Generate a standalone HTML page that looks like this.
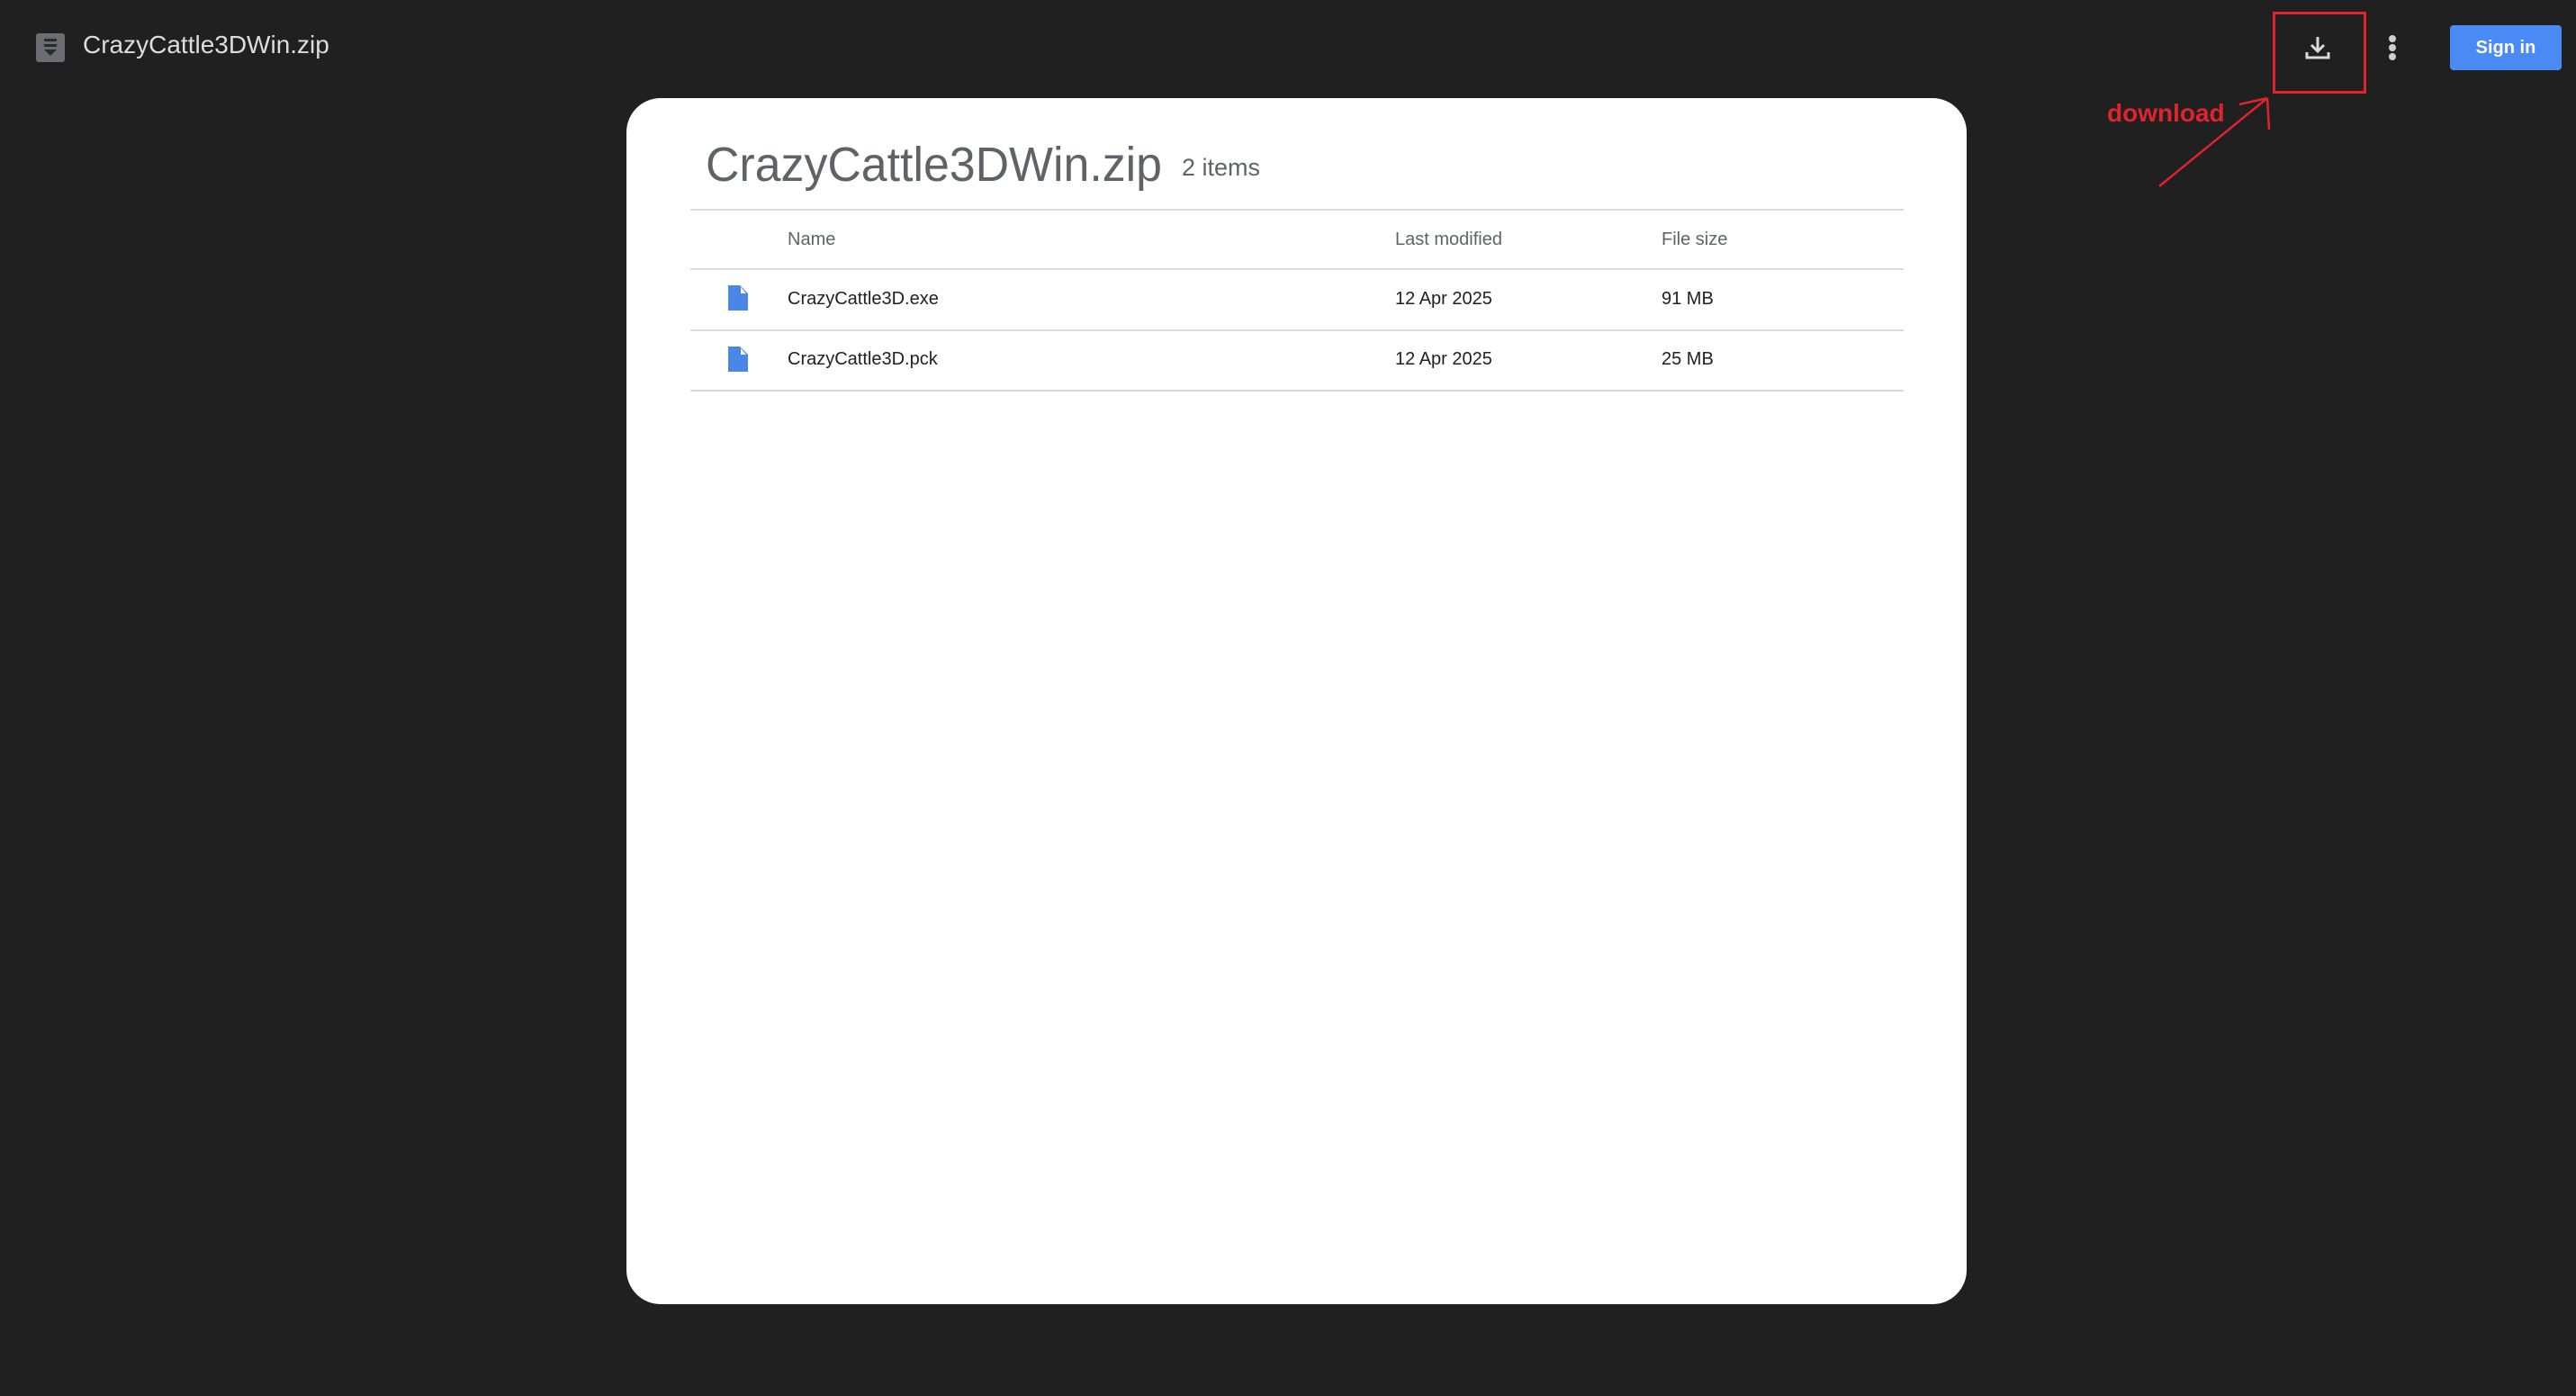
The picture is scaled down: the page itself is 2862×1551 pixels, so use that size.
<!DOCTYPE html>
<html><head><meta charset="utf-8"><style>
html,body{margin:0;padding:0;}
body{width:2862px;height:1551px;background:#202020;position:relative;overflow:hidden;font-family:"Liberation Sans",sans-serif;}
.abs{position:absolute;}
.card{left:696px;top:109px;width:1489px;height:1340px;background:#fff;border-radius:38px;}
.line{position:absolute;left:767px;width:1348px;height:2px;background:#dadada;}
.t{position:absolute;white-space:nowrap;}
.hd{color:#5f6368;font-size:20px;}
.rw{color:#202124;font-size:20px;}
</style></head><body>
<svg class="abs" style="left:40px;top:37px" width="32" height="32" viewBox="0 0 32 32"><rect width="32" height="32" rx="3" fill="#6b6d72"/><rect x="9" y="6" width="14" height="3" fill="#2a2a2a"/><rect x="9" y="12" width="14" height="3" fill="#2a2a2a"/><path d="M9 18h14l-7 7z" fill="#2a2a2a"/></svg>
<div class="t" style="left:92px;top:34px;font-size:28px;color:#dcdcdc;">CrazyCattle3DWin.zip</div>

<svg class="abs" style="left:2561px;top:39px" width="28" height="28" viewBox="0 0 28 28"><path d="M14 2v15M7 11l7 7 7-7" stroke="#dadada" stroke-width="3" fill="none"/><path d="M2 19v6h24v-6" stroke="#dadada" stroke-width="3" fill="none"/></svg>
<div class="abs" style="left:2525px;top:13px;width:98px;height:85px;border:3px solid #e0242c;"></div>
<div class="abs" style="left:2654px;top:39px;width:8px;height:8px;border-radius:50%;background:#cfcfcf"></div>
<div class="abs" style="left:2654px;top:49px;width:8px;height:8px;border-radius:50%;background:#cfcfcf"></div>
<div class="abs" style="left:2654px;top:59px;width:8px;height:8px;border-radius:50%;background:#cfcfcf"></div>
<div class="abs" style="left:2722px;top:28px;width:124px;height:50px;background:#4a8af4;border-radius:4px;color:#fff;font-size:20px;font-weight:bold;line-height:50px;text-align:center;">Sign in</div>
<div class="t" style="left:2341px;top:110px;font-size:28px;font-weight:bold;color:#e0242c;">download</div>
<svg class="abs" style="left:0;top:0" width="2862" height="260"><path d="M2399 207L2519 109M2519 109L2488 116M2519 109L2521 144" stroke="#e0242c" stroke-width="2.5" fill="none"/></svg>

<div class="abs card"></div>
<div class="t" style="left:784px;top:152px;font-size:54px;color:#5f6368;transform:scaleX(0.96);transform-origin:left;">CrazyCattle3DWin.zip</div>
<div class="t" style="left:1313px;top:171px;font-size:27px;color:#5f6368;">2 items</div>
<div class="line" style="top:232px"></div>
<div class="t hd" style="left:875px;top:255px">Name</div>
<div class="t hd" style="left:1550px;top:255px">Last modified</div>
<div class="t hd" style="left:1846px;top:255px">File size</div>
<div class="line" style="top:298px"></div>
<svg class="abs" style="left:809px;top:317px" width="22" height="28" viewBox="0 0 22 28"><path d="M0 0h13l9 9v19H0z" fill="#4a86e8"/><path d="M14 2l6 7h-6z" fill="#fff"/></svg>
<div class="t rw" style="left:875px;top:321px">CrazyCattle3D.exe</div>
<div class="t rw" style="left:1550px;top:321px">12 Apr 2025</div>
<div class="t rw" style="left:1846px;top:321px">91 MB</div>
<div class="line" style="top:366px"></div>
<svg class="abs" style="left:809px;top:385px" width="22" height="28" viewBox="0 0 22 28"><path d="M0 0h13l9 9v19H0z" fill="#4a86e8"/><path d="M14 2l6 7h-6z" fill="#fff"/></svg>
<div class="t rw" style="left:875px;top:388px">CrazyCattle3D.pck</div>
<div class="t rw" style="left:1550px;top:388px">12 Apr 2025</div>
<div class="t rw" style="left:1846px;top:388px">25 MB</div>
<div class="line" style="top:433px"></div>
</body></html>
